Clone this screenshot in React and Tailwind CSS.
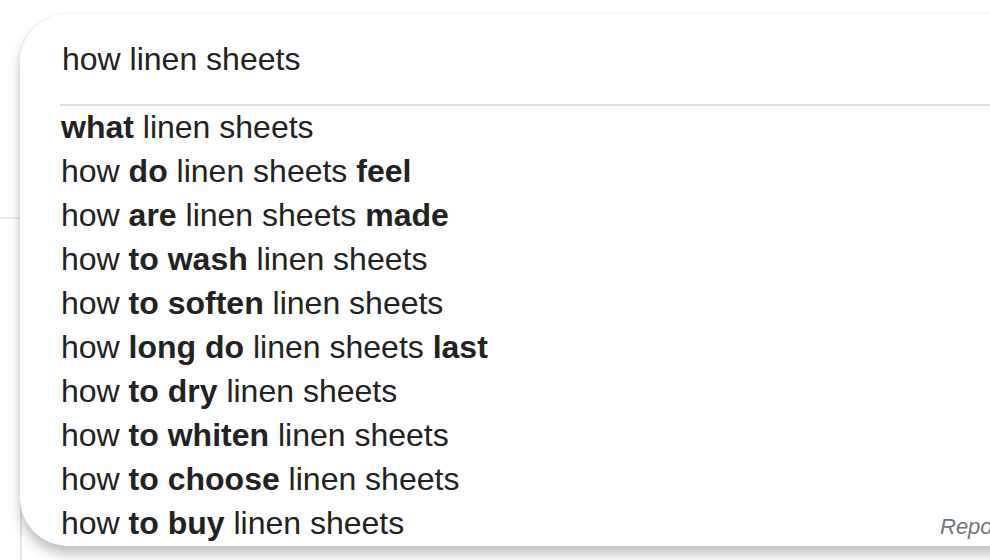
import React from "react";

const rows = [
  [["what", true], [" linen sheets", false]],
  [["how ", false], ["do", true], [" linen sheets ", false], ["feel", true]],
  [["how ", false], ["are", true], [" linen sheets ", false], ["made", true]],
  [["how ", false], ["to wash", true], [" linen sheets", false]],
  [["how ", false], ["to soften", true], [" linen sheets", false]],
  [["how ", false], ["long do", true], [" linen sheets ", false], ["last", true]],
  [["how ", false], ["to dry", true], [" linen sheets", false]],
  [["how ", false], ["to whiten", true], [" linen sheets", false]],
  [["how ", false], ["to choose", true], [" linen sheets", false]],
  [["how ", false], ["to buy", true], [" linen sheets", false]],
];

export default function App() {
  return (
    <div
      className="relative w-[990px] h-[560px] overflow-hidden bg-white text-[#222]"
      style={{ fontFamily: '"Liberation Sans", Arial, sans-serif' }}
    >
      <div className="absolute top-[217px] left-0 w-[22px] h-[2px] bg-[#e8e8e8]" />
      <div className="absolute top-[500px] bottom-0 left-[20px] w-[2px] bg-[#e4e4e4]" />
      <div className="relative ml-[20px] mt-[14px] w-[1020px] rounded-[48px] bg-white shadow-[0_8px_12px_rgba(32,33,36,0.28),0_0_3px_rgba(32,33,36,0.08)]">
        <div className="h-[90px] flex items-center pl-[42px] text-[32px] whitespace-pre">
          how linen sheets
        </div>
        <div className="ml-[40px] h-[2px] bg-[#dfe1e5]" />
        <ul className="-mt-[1px] pb-[1px]">
          {rows.map((r, i) => (
            <li
              key={i}
              className="h-[44px] flex items-center pl-[41px] text-[32px] whitespace-pre"
            >
              {r.map(([t, b], j) =>
                b ? (
                  <b key={j} className="font-bold">
                    {t}
                  </b>
                ) : (
                  <span key={j}>{t}</span>
                )
              )}
            </li>
          ))}
        </ul>
        <div className="absolute left-[920px] top-[500px] leading-[25px] text-[22px] italic text-[#70757a] whitespace-nowrap">
          Report inappropriate predictions
        </div>
      </div>
    </div>
  );
}
